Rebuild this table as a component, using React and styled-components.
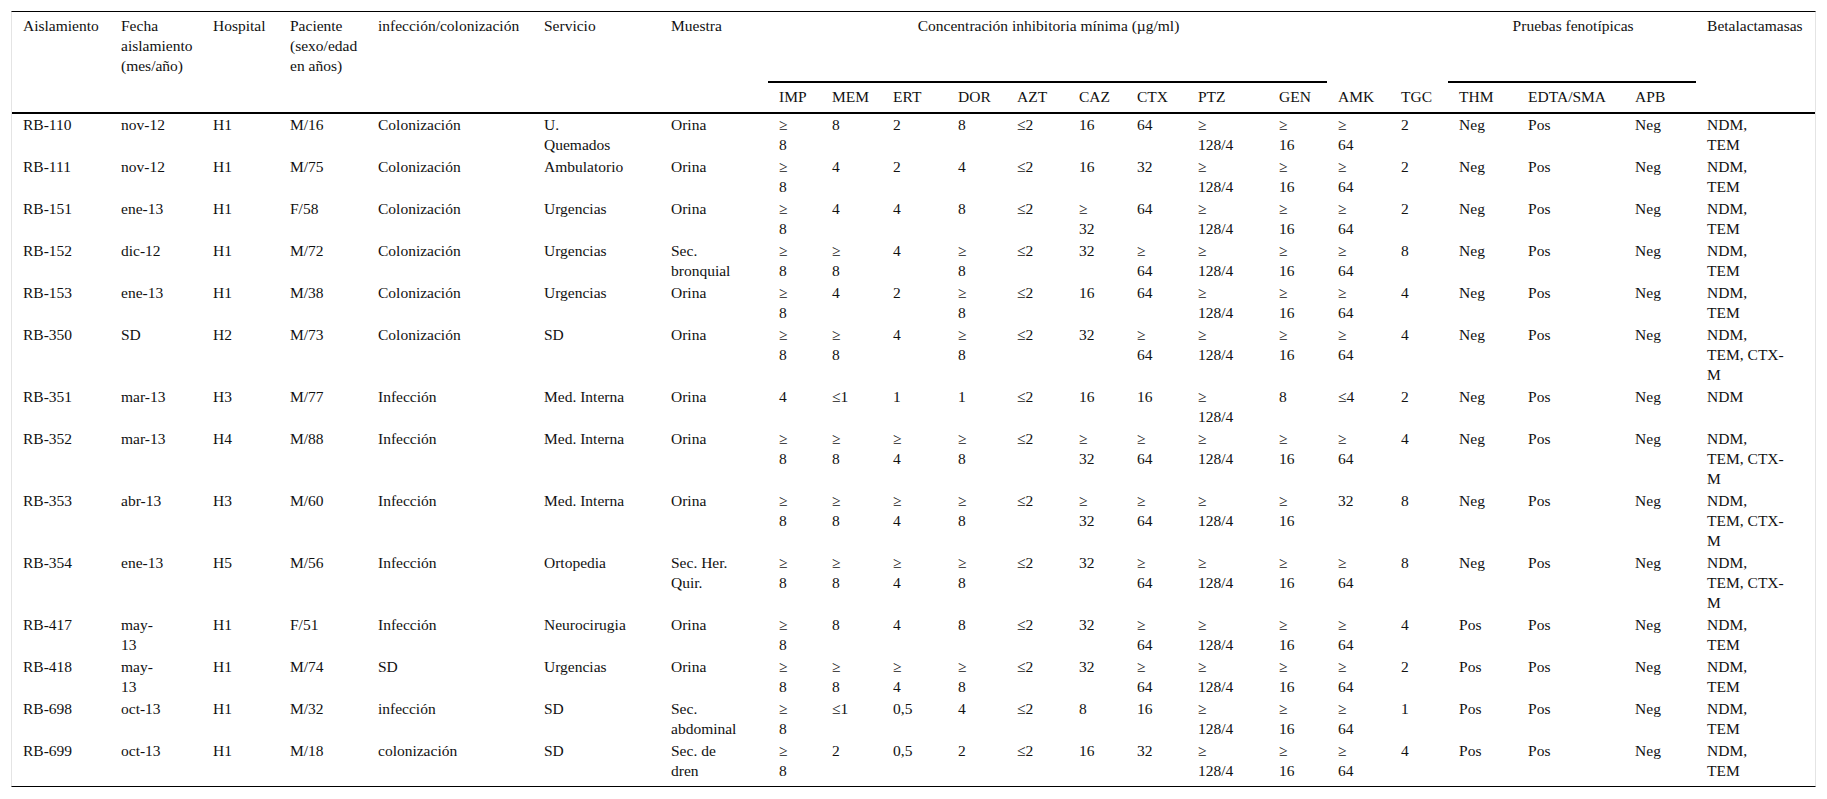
import React from "react";
import styled, { createGlobalStyle } from "styled-components";

const GlobalStyle = createGlobalStyle`
  body {
    margin: 0;
    background: #fff;
  }
`;

const Page = styled.div`
  padding: 11px;
`;

const Frame = styled.div`
  border-top: 1px solid #000;
  border-bottom: 1px solid #000;
  border-left: 1px solid #e4e4e4;
  border-right: 1px solid #e4e4e4;
  padding-bottom: 4px;
`;

const Table = styled.table`
  width: 100%;
  table-layout: fixed;
  border-collapse: separate;
  border-spacing: 0;
  font-family: "Liberation Serif", "Times New Roman", serif;
  font-size: 15.5px;
  line-height: 20px;
  color: #111;
`;

const HeadRow = styled.tr`
  height: ${(props) => props.$h}px;
`;

const HeadCell = styled.th`
  padding: 4px 9px 5px 11px;
  font-weight: normal;
  text-align: ${(props) => (props.$center ? "center" : "left")};
  vertical-align: top;
  white-space: nowrap;
  border-bottom: 2px solid ${(props) => (props.$rule ? "#000" : "transparent")};
`;

const Cell = styled.td`
  padding: 1px 9px 1px 11px;
  vertical-align: top;
  white-space: nowrap;
`;

const widths = [
  98, 92, 77, 88, 166, 127, 108, 53, 61, 65, 59, 62, 58, 61, 81, 59, 63, 58,
  69, 107, 72, 119,
];

const leadHeads = [
  "Aislamiento",
  "Fecha|aislamiento|(mes/año)",
  "Hospital",
  "Paciente|(sexo/edad|en años)",
  "infección/colonización",
  "Servicio",
  "Muestra",
];

const micHeads = ["IMP", "MEM", "ERT", "DOR", "AZT", "CAZ", "CTX", "PTZ", "GEN", "AMK", "TGC"];
const testHeads = ["THM", "EDTA/SMA", "APB"];

const rows = [
  ["RB-110", "nov-12", "H1", "M/16", "Colonización", "U.|Quemados", "Orina", "≥|8", "8", "2", "8", "≤2", "16", "64", "≥|128/4", "≥|16", "≥|64", "2", "Neg", "Pos", "Neg", "NDM,|TEM"],
  ["RB-111", "nov-12", "H1", "M/75", "Colonización", "Ambulatorio", "Orina", "≥|8", "4", "2", "4", "≤2", "16", "32", "≥|128/4", "≥|16", "≥|64", "2", "Neg", "Pos", "Neg", "NDM,|TEM"],
  ["RB-151", "ene-13", "H1", "F/58", "Colonización", "Urgencias", "Orina", "≥|8", "4", "4", "8", "≤2", "≥|32", "64", "≥|128/4", "≥|16", "≥|64", "2", "Neg", "Pos", "Neg", "NDM,|TEM"],
  ["RB-152", "dic-12", "H1", "M/72", "Colonización", "Urgencias", "Sec.|bronquial", "≥|8", "≥|8", "4", "≥|8", "≤2", "32", "≥|64", "≥|128/4", "≥|16", "≥|64", "8", "Neg", "Pos", "Neg", "NDM,|TEM"],
  ["RB-153", "ene-13", "H1", "M/38", "Colonización", "Urgencias", "Orina", "≥|8", "4", "2", "≥|8", "≤2", "16", "64", "≥|128/4", "≥|16", "≥|64", "4", "Neg", "Pos", "Neg", "NDM,|TEM"],
  ["RB-350", "SD", "H2", "M/73", "Colonización", "SD", "Orina", "≥|8", "≥|8", "4", "≥|8", "≤2", "32", "≥|64", "≥|128/4", "≥|16", "≥|64", "4", "Neg", "Pos", "Neg", "NDM,|TEM, CTX-|M"],
  ["RB-351", "mar-13", "H3", "M/77", "Infección", "Med. Interna", "Orina", "4", "≤1", "1", "1", "≤2", "16", "16", "≥|128/4", "8", "≤4", "2", "Neg", "Pos", "Neg", "NDM"],
  ["RB-352", "mar-13", "H4", "M/88", "Infección", "Med. Interna", "Orina", "≥|8", "≥|8", "≥|4", "≥|8", "≤2", "≥|32", "≥|64", "≥|128/4", "≥|16", "≥|64", "4", "Neg", "Pos", "Neg", "NDM,|TEM, CTX-|M"],
  ["RB-353", "abr-13", "H3", "M/60", "Infección", "Med. Interna", "Orina", "≥|8", "≥|8", "≥|4", "≥|8", "≤2", "≥|32", "≥|64", "≥|128/4", "≥|16", "32", "8", "Neg", "Pos", "Neg", "NDM,|TEM, CTX-|M"],
  ["RB-354", "ene-13", "H5", "M/56", "Infección", "Ortopedia", "Sec. Her.|Quir.", "≥|8", "≥|8", "≥|4", "≥|8", "≤2", "32", "≥|64", "≥|128/4", "≥|16", "≥|64", "8", "Neg", "Pos", "Neg", "NDM,|TEM, CTX-|M"],
  ["RB-417", "may-|13", "H1", "F/51", "Infección", "Neurocirugia", "Orina", "≥|8", "8", "4", "8", "≤2", "32", "≥|64", "≥|128/4", "≥|16", "≥|64", "4", "Pos", "Pos", "Neg", "NDM,|TEM"],
  ["RB-418", "may-|13", "H1", "M/74", "SD", "Urgencias", "Orina", "≥|8", "≥|8", "≥|4", "≥|8", "≤2", "32", "≥|64", "≥|128/4", "≥|16", "≥|64", "2", "Pos", "Pos", "Neg", "NDM,|TEM"],
  ["RB-698", "oct-13", "H1", "M/32", "infección", "SD", "Sec.|abdominal", "≥|8", "≤1", "0,5", "4", "≤2", "8", "16", "≥|128/4", "≥|16", "≥|64", "1", "Pos", "Pos", "Neg", "NDM,|TEM"],
  ["RB-699", "oct-13", "H1", "M/18", "colonización", "SD", "Sec. de|dren", "≥|8", "2", "0,5", "2", "≤2", "16", "32", "≥|128/4", "≥|16", "≥|64", "4", "Pos", "Pos", "Neg", "NDM,|TEM"],
];

// "|" marks a line break in the source table
const Lines = ({ text }) =>
  text.split("|").map((line, i) => (
    <React.Fragment key={i}>
      {i > 0 && <br />}
      {line}
    </React.Fragment>
  ));

const App = () => {
  return (
    <>
      <GlobalStyle />
      <Page>
        <Frame>
          <Table>
            <colgroup>
              {widths.map((w, i) => (
                <col key={i} style={{ width: w }} />
              ))}
            </colgroup>
            <thead>
              <HeadRow $h={71}>
                {leadHeads.map((h) => (
                  <HeadCell key={h} rowSpan={2} $rule>
                    <Lines text={h} />
                  </HeadCell>
                ))}
                <HeadCell colSpan={9} $center $rule>
                  Concentración inhibitoria mínima (µg/ml)
                </HeadCell>
                <HeadCell colSpan={2} />
                <HeadCell colSpan={3} $center $rule>
                  Pruebas fenotípicas
                </HeadCell>
                <HeadCell rowSpan={2} $rule>
                  Betalactamasas
                </HeadCell>
              </HeadRow>
              <HeadRow $h={31}>
                {[...micHeads, ...testHeads].map((h) => (
                  <HeadCell key={h} $rule>
                    {h}
                  </HeadCell>
                ))}
              </HeadRow>
            </thead>
            <tbody>
              {rows.map((row) => (
                <tr key={row[0]}>
                  {row.map((value, i) => (
                    <Cell key={i}>
                      <Lines text={value} />
                    </Cell>
                  ))}
                </tr>
              ))}
            </tbody>
          </Table>
        </Frame>
      </Page>
    </>
  );
};

export default App;
